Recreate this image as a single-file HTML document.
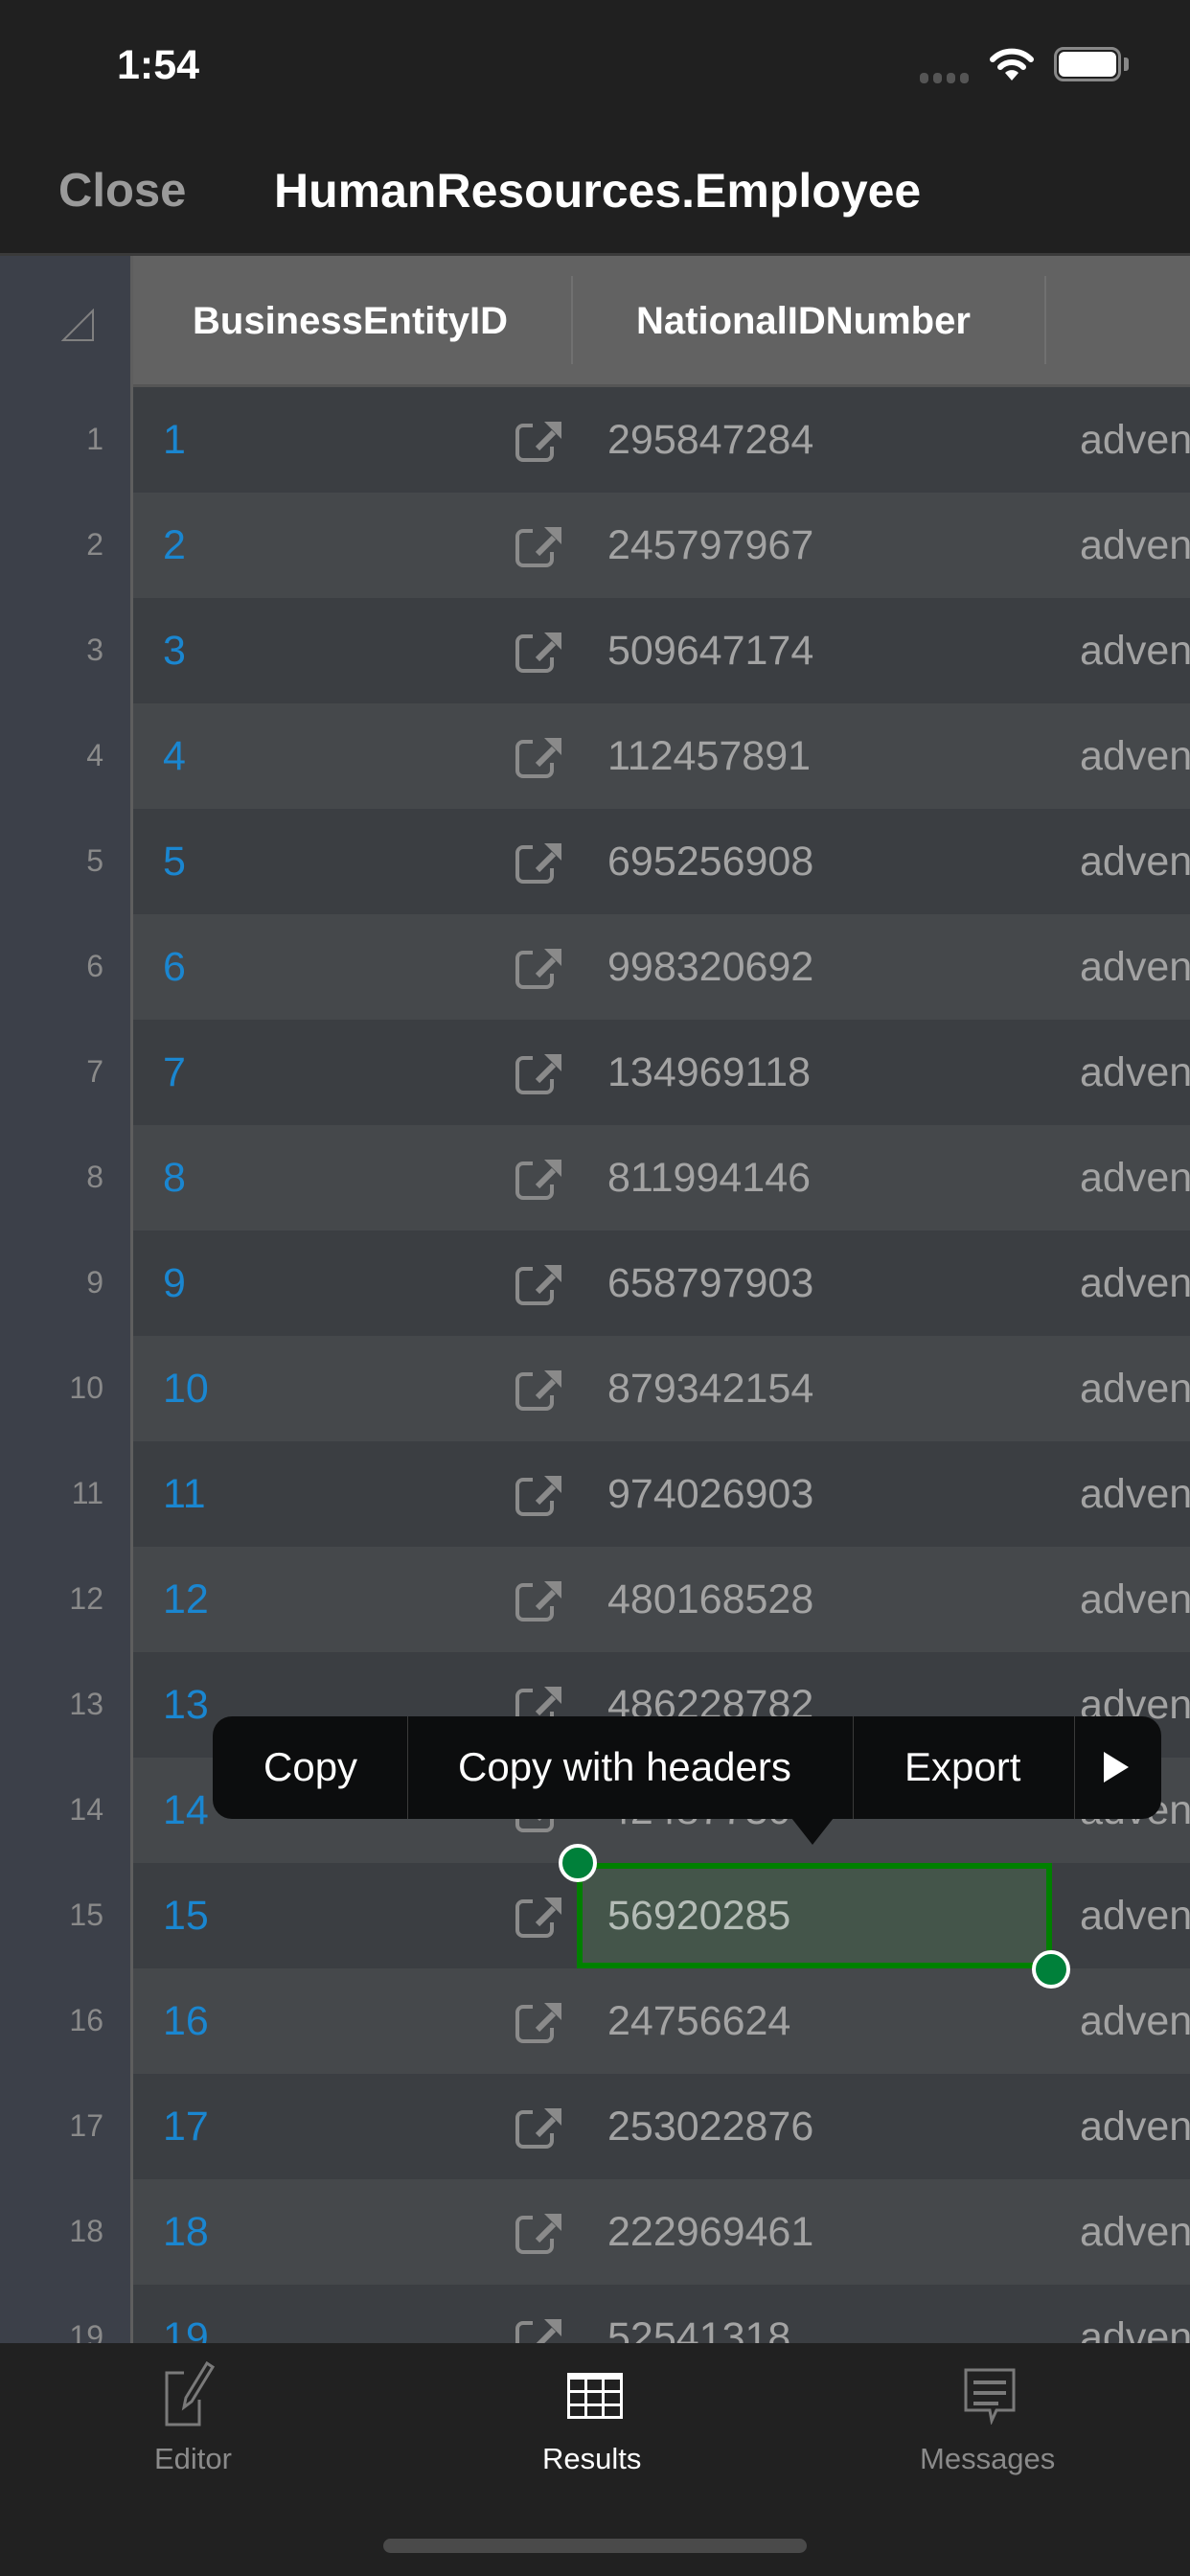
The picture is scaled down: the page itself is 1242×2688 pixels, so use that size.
<!DOCTYPE html>
<html><head><meta charset="utf-8"><style>
*{margin:0;padding:0;box-sizing:border-box}
body{width:1242px;height:2688px;background:#202020;font-family:"Liberation Sans",sans-serif;position:relative;overflow:hidden}
.a{position:absolute}
</style></head><body>
<div class="a" style="left:0;top:0;width:1242px;height:264px;background:#202020"></div>
<div class="a" style="left:122px;top:44px;color:#fff;font-size:43px;font-weight:bold">1:54</div>
<div class="a" style="left:960px;top:76px;width:56px;height:11px">
<span class="a" style="left:0;top:0;width:9px;height:11px;border-radius:4px;background:#555"></span>
<span class="a" style="left:14px;top:0;width:9px;height:11px;border-radius:4px;background:#555"></span>
<span class="a" style="left:28px;top:0;width:9px;height:11px;border-radius:4px;background:#555"></span>
<span class="a" style="left:42px;top:0;width:9px;height:11px;border-radius:4px;background:#555"></span></div>
<svg class="a" style="left:1032px;top:48px" width="48" height="38" viewBox="0 0 48 38"><path d="M4 14 A28 28 0 0 1 44 14" stroke="#fff" stroke-width="6" fill="none" stroke-linecap="round"/><path d="M12 22 A17 17 0 0 1 36 22" stroke="#fff" stroke-width="6" fill="none" stroke-linecap="round"/><path d="M24 36 L17 28 A10 10 0 0 1 31 28 Z" fill="#fff"/></svg>
<div class="a" style="left:1100px;top:49px;width:70px;height:36px;border:3px solid #888;border-radius:10px"></div>
<div class="a" style="left:1105px;top:54px;width:60px;height:26px;background:#fff;border-radius:6px"></div>
<div class="a" style="left:1173px;top:60px;width:5px;height:14px;background:#888;border-radius:0 3px 3px 0"></div>
<div class="a" style="left:61px;top:171px;color:#9a9a9a;font-size:49px;font-weight:bold">Close</div>
<div class="a" style="left:286px;top:170px;color:#fff;font-size:50px;font-weight:bold">HumanResources.Employee</div>

<div class="a" style="left:0;top:264px;width:1242px;height:2181px;background:#3b3e42"></div>
<div class="a" style="left:0;top:264px;width:136px;height:2181px;background:#3c4049"></div>
<div class="a" style="left:136px;top:264px;width:3px;height:2181px;background:#5e5e5e"></div>
<div class="a" style="left:139px;top:267px;width:1103px;height:135px;background:#626262"></div>
<div class="a" style="left:0;top:264px;width:1242px;height:3px;background:#3a3a3a"></div>
<div class="a" style="left:139px;top:401px;width:1103px;height:3px;background:#555"></div>
<svg class="a" style="left:64px;top:322px" width="36" height="36"><path d="M2 33 L33 33 L33 2 Z" fill="none" stroke="#808080" stroke-width="2"/></svg>
<div class="a" style="left:201px;top:313px;color:#fff;font-size:40px;font-weight:bold">BusinessEntityID</div>
<div class="a" style="left:596px;top:288px;width:2px;height:92px;background:#707070"></div>
<div class="a" style="left:664px;top:313px;color:#fff;font-size:40px;font-weight:bold">NationalIDNumber</div>
<div class="a" style="left:1090px;top:288px;width:2px;height:92px;background:#707070"></div>

<div id="rows"></div>
<script>
var d=["295847284","245797967","509647174","112457891","695256908","998320692","134969118","811994146","658797903","879342154","974026903","480168528","486228782","42487730","56920285","24756624","253022876","222969461","52541318"];
var h="";
for(var i=0;i<19;i++){var t=404+110*i;var bg=i%2?"#45484b":"#3b3e42";
h+='<div class="a" style="left:139px;top:'+t+'px;width:1103px;height:110px;background:'+bg+'"></div>';
h+='<div class="a" style="left:0;top:'+(t+36)+'px;width:108px;text-align:right;color:#8a8a8a;font-size:32px">'+(i+1)+'</div>';
h+='<div class="a" style="left:170px;top:'+(t+31)+'px;color:#1a86d0;font-size:43px">'+(i+1)+'</div>';
h+='<svg class="a" style="left:536px;top:'+(t+32)+'px" width="54" height="46" viewBox="0 0 54 46"><path d="M20 8 H10 A6 6 0 0 0 4 14 V38 A6 6 0 0 0 10 44 H34 A6 6 0 0 0 40 38 V30" fill="none" stroke="#8a8a8a" stroke-width="4"/><path d="M25 32 L42 15" stroke="#8a8a8a" stroke-width="6"/><path d="M32 4 H50 V22 Z" fill="#8a8a8a"/></svg>';
h+='<div class="a" style="left:634px;top:'+(t+31)+'px;color:'+(i==14?"#b4bcb6":"#a3a3a3")+';font-size:43px;z-index:'+(i==14?3:0)+'">'+d[i]+'</div>';
h+='<div class="a" style="left:1127px;top:'+(t+31)+'px;color:#a3a3a3;font-size:43px">adven</div>';}
document.getElementById("rows").innerHTML=h;
</script>
<div class="a" style="left:602px;top:1944px;width:496px;height:110px;background:#44554a;border:6px solid #008000;z-index:2"></div>
<div class="a" style="left:583px;top:1924px;width:40px;height:40px;border-radius:50%;background:#00803a;border:4px solid #fff;z-index:4"></div>
<div class="a" style="left:1077px;top:2035px;width:40px;height:40px;border-radius:50%;background:#00803a;border:4px solid #fff;z-index:4"></div>

<div class="a" style="left:222px;top:1791px;width:990px;height:107px;background:#0c0d0e;border-radius:20px;z-index:5"></div>
<div class="a" style="left:826px;top:1897px;width:0;height:0;border-left:22px solid transparent;border-right:22px solid transparent;border-top:28px solid #0c0d0e;z-index:5"></div>
<div class="a" style="left:425px;top:1791px;width:1px;height:107px;background:#3a3a3a;z-index:6"></div>
<div class="a" style="left:890px;top:1791px;width:1px;height:107px;background:#3a3a3a;z-index:6"></div>
<div class="a" style="left:1121px;top:1791px;width:1px;height:107px;background:#3a3a3a;z-index:6"></div>
<div class="a" style="left:275px;top:1820px;color:#fff;font-size:42px;z-index:6">Copy</div>
<div class="a" style="left:478px;top:1820px;color:#fff;font-size:42px;z-index:6">Copy with headers</div>
<div class="a" style="left:944px;top:1820px;color:#fff;font-size:42px;z-index:6">Export</div>
<svg class="a" style="left:1150px;top:1826px;z-index:6" width="30" height="36"><path d="M2 2 L28 18 L2 34 Z" fill="#fff"/></svg>

<div class="a" style="left:0;top:2445px;width:1242px;height:243px;background:#212121"></div>
<svg class="a" style="left:170px;top:2464px" width="72" height="70" viewBox="0 0 72 70"><path d="M22 12 H4 V66 H38 V40" fill="none" stroke="#7a7a7a" stroke-width="3"/><path d="M22 48 L24 38 L46 2 L52 6 L30 42 Z" fill="none" stroke="#7a7a7a" stroke-width="3"/></svg>
<div class="a" style="left:161px;top:2548px;color:#8a8a8a;font-size:31px">Editor</div>
<div class="a" style="left:592px;top:2476px;width:58px;height:48px;border:3px solid #fff;background:#fff"></div>
<svg class="a" style="left:592px;top:2476px" width="58" height="48"><g fill="#212121"><rect x="3" y="7" width="15" height="11"/><rect x="21" y="7" width="15" height="11"/><rect x="39" y="7" width="16" height="11"/><rect x="3" y="21" width="15" height="11"/><rect x="21" y="21" width="15" height="11"/><rect x="39" y="21" width="16" height="11"/><rect x="3" y="35" width="15" height="10"/><rect x="21" y="35" width="15" height="10"/><rect x="39" y="35" width="16" height="10"/></g></svg>
<div class="a" style="left:566px;top:2548px;color:#fff;font-size:31px">Results</div>
<svg class="a" style="left:1005px;top:2470px" width="58" height="60" viewBox="0 0 58 60"><path d="M3 3 H53 V45 H35 L30 56 L28 45 H3 Z" fill="none" stroke="#7a7a7a" stroke-width="3"/><path d="M11 16 H45 M11 27 H45 M11 38 H37" stroke="#7a7a7a" stroke-width="4"/></svg>
<div class="a" style="left:960px;top:2548px;color:#8a8a8a;font-size:31px">Messages</div>
<div class="a" style="left:400px;top:2649px;width:442px;height:15px;border-radius:8px;background:#4a4a4a"></div>
</body></html>
